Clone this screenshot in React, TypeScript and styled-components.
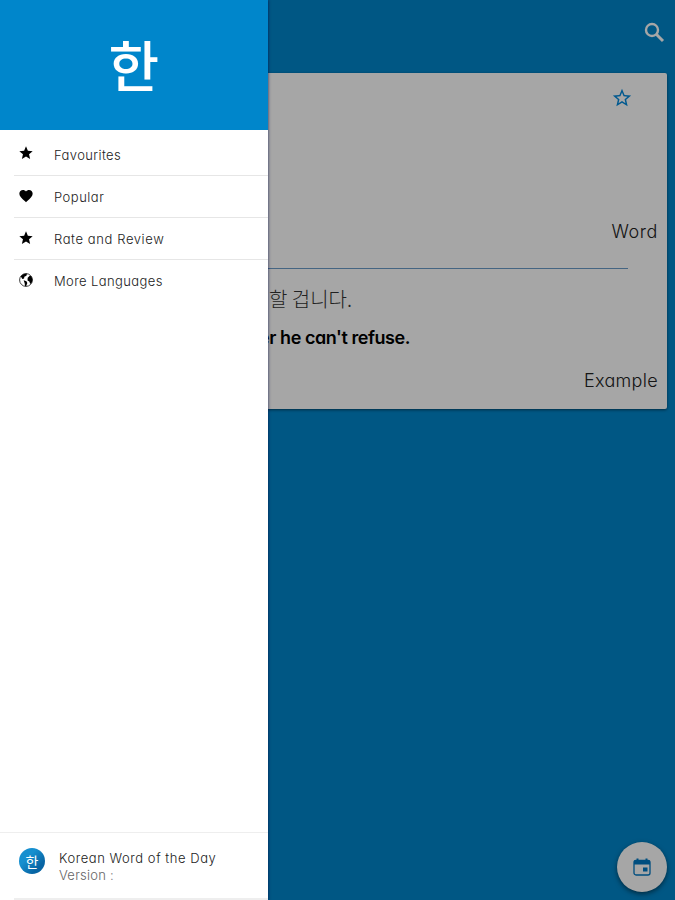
import type { ReactNode } from "react";
import styled, { createGlobalStyle } from "styled-components";
import { MdFavorite, MdStar, MdStarBorder } from "react-icons/md";

const GlobalStyle = createGlobalStyle`
  * {
    box-sizing: border-box;
  }

  body {
    margin: 0;
    font-family: Inter, "Noto Sans CJK KR", sans-serif;
    font-feature-settings: "cv11";
    overflow: hidden;
  }
`;

const Screen = styled.div`
  position: relative;
  height: 900px;
  background: #0086cb;
  overflow: hidden;
`;

const TopBar = styled.header`
  display: flex;
  justify-content: flex-end;
  align-items: center;
  height: 65px;
  padding-right: 8px;
  color: #fff;
`;

const WordCard = styled.article`
  display: flex;
  flex-direction: column;
  height: 336px;
  margin: 8px 8.5px 0 8px;
  background: #fff;
  border-radius: 2px;
  box-shadow: 0 1px 3px rgba(0, 0, 0, 0.5);
`;

const WordPanel = styled.section`
  display: flex;
  flex-direction: column;
  justify-content: space-between;
  align-items: flex-end;
  height: 196px;
  margin-right: 38.5px;
  padding: 14px 0 23px;
  border-bottom: 1px solid #6a9cc8;
`;

const FavouriteButton = styled.div`
  display: flex;
  margin-right: -5px;
  color: #0089dc;
`;

const CardLabel = styled.div<{ $spacing: number }>`
  font-size: 18px;
  font-weight: 300;
  line-height: 26px;
  letter-spacing: ${({ $spacing }) => $spacing}px;
  white-space: nowrap;
  color: #222;
`;

const WordLabel = styled(CardLabel)`
  margin-right: -30px;
`;

const ExamplePanel = styled.section`
  display: flex;
  flex-direction: column;
  padding: 17px 8.5px 0 0;
`;

const Sentence = styled.p`
  width: 344px;
  margin: 0;
  font-family: "Noto Sans CJK KR", sans-serif;
  font-size: 20px;
  font-weight: 300;
  line-height: 26px;
  text-align: right;
  color: #333;
`;

const Translation = styled.p`
  width: 402px;
  margin: 13px 0 17px;
  font-size: 18px;
  font-weight: 600;
  line-height: 26px;
  letter-spacing: -0.45px;
  text-align: right;
  color: #000;
`;

const ExampleLabel = styled(CardLabel)`
  align-self: flex-end;
`;

const CalendarButton = styled.div`
  position: absolute;
  right: 8px;
  bottom: 8px;
  display: flex;
  align-items: center;
  justify-content: center;
  width: 50px;
  height: 50px;
  border-radius: 50%;
  background: #fff;
  color: #0078c4;
  box-shadow: 0 2px 5px rgba(0, 0, 0, 0.5);
`;

const Scrim = styled.div`
  position: absolute;
  inset: 0;
  background: rgba(0, 0, 0, 0.35);
`;

const Drawer = styled.aside`
  position: absolute;
  inset: 0 auto 0 0;
  display: flex;
  flex-direction: column;
  width: 267.5px;
  background: #fff;
  box-shadow: 0 0 3px rgba(0, 10, 70, 0.8);
`;

const DrawerHeader = styled.div`
  display: flex;
  align-items: center;
  justify-content: center;
  height: 130px;
  padding-bottom: 3px;
  background: #0086cb;
  color: #fff;
  font-family: "Noto Sans CJK KR", sans-serif;
  font-size: 55px;
  font-weight: 500;
  line-height: 1;
`;

const Menu = styled.nav`
  flex: 1;
  padding: 3px 0 0 14px;
`;

const MenuRow = styled.div`
  display: flex;
  align-items: center;
  height: 42.1px;
  padding: 1px 0 0 4px;
  color: #000;

  & + & {
    border-top: 1px solid #e6e6e6;
  }

  svg {
    margin: -3px 20px 0 0;
  }
`;

const MenuText = styled.span<{ $spacing: number }>`
  font-size: 13px;
  font-weight: 300;
  letter-spacing: ${({ $spacing }) => $spacing}px;
  color: #222;
`;

const DrawerFooter = styled.footer`
  display: flex;
  height: 66px;
  padding: 15px 0 0 19px;
  border-top: 1px solid #eee;
`;

const FooterEdge = styled.div`
  height: 2px;
  margin-left: 14px;
  background: #eee;
`;

const AppBadge = styled.div`
  display: flex;
  align-items: center;
  justify-content: center;
  width: 26px;
  height: 26px;
  margin-right: 14px;
  border-radius: 50%;
  background: linear-gradient(135deg, #168fcf 35%, #0865a4 75%);
  color: #fff;
  font-family: "Noto Sans CJK KR", sans-serif;
  font-size: 14px;
  line-height: 1;
`;

const AppName = styled.div`
  margin-top: 2px;
  font-size: 13px;
  font-weight: 300;
  line-height: 17px;
  letter-spacing: 0.55px;
  color: #222;
`;

const Version = styled(AppName)`
  margin-top: 0;
  letter-spacing: 0.25px;
  color: #666;
`;

const SearchIcon = () => (
  <svg width="25" height="25" viewBox="0 0 25 25" fill="none" stroke="currentColor">
    <circle cx="10" cy="10" r="6" strokeWidth="2.4" />
    <path d="M14.300 14.300 21 21" strokeWidth="3" />
  </svg>
);

const GlobeIcon = () => (
  <svg width="16" height="16" viewBox="0 0 24 24" fill="none">
    <circle cx="12" cy="12" r="9.600" stroke="#222" strokeWidth="1.300" />
    <path
      d="M4 6.500 8.500 3l5-.6-.8 3.400-3.200 1.400-.4 2.600-2.600.7zM14.500 8.800l3-3 2.500.7 1.700 4.500-.7 4.500-2.500 2.500-1.500-3.800-2.700-1.600zM8.500 12.500l4.200 1.500 1.300 2.500-1.800 4.800-1.700-.4-.5-4z"
      fill="#000"
    />
  </svg>
);

const CalendarIcon = () => (
  <svg width="20" height="20" viewBox="0 0 20 20" fill="none">
    <rect x="2" y="3.500" width="16" height="14.500" rx="2" stroke="currentColor" strokeWidth="1.300" />
    <path d="M2 3.500h16v4H2zM4.500 1.500h2v3h-2zM13.500 1.500h2v3h-2z" fill="currentColor" />
    <rect x="11" y="10.500" width="4.500" height="4" fill="currentColor" />
  </svg>
);

type MenuItem = { label: string; icon: ReactNode; spacing: number };

const menuItems: MenuItem[] = [
  { label: "Favourites", icon: <MdStar size={16} />, spacing: 0.4 },
  { label: "Popular", icon: <MdFavorite size={16} />, spacing: 0.5 },
  { label: "Rate and Review", icon: <MdStar size={16} />, spacing: 0.6 },
  { label: "More Languages", icon: <GlobeIcon />, spacing: 0.4 },
];

const App = () => {
  return (
    <>
      <GlobalStyle />
      <Screen>
        <TopBar>
          <SearchIcon />
        </TopBar>

        <WordCard>
          <WordPanel>
            <FavouriteButton>
              <MdStarBorder size={22} />
            </FavouriteButton>
            <WordLabel $spacing={0.6}>Word</WordLabel>
          </WordPanel>
          <ExamplePanel>
            <Sentence>할 겁니다.</Sentence>
            <Translation>offer he can't refuse.</Translation>
            <ExampleLabel $spacing={0.3}>Example</ExampleLabel>
          </ExamplePanel>
        </WordCard>

        <CalendarButton>
          <CalendarIcon />
        </CalendarButton>

        <Scrim />

        <Drawer>
          <DrawerHeader>한</DrawerHeader>
          <Menu>
            {menuItems.map(({ label, icon, spacing }) => (
              <MenuRow key={label}>
                {icon}
                <MenuText $spacing={spacing}>{label}</MenuText>
              </MenuRow>
            ))}
          </Menu>
          <DrawerFooter>
            <AppBadge>한</AppBadge>
            <div>
              <AppName>Korean Word of the Day</AppName>
              <Version>Version :</Version>
            </div>
          </DrawerFooter>
          <FooterEdge />
        </Drawer>
      </Screen>
    </>
  );
};

export default App;
